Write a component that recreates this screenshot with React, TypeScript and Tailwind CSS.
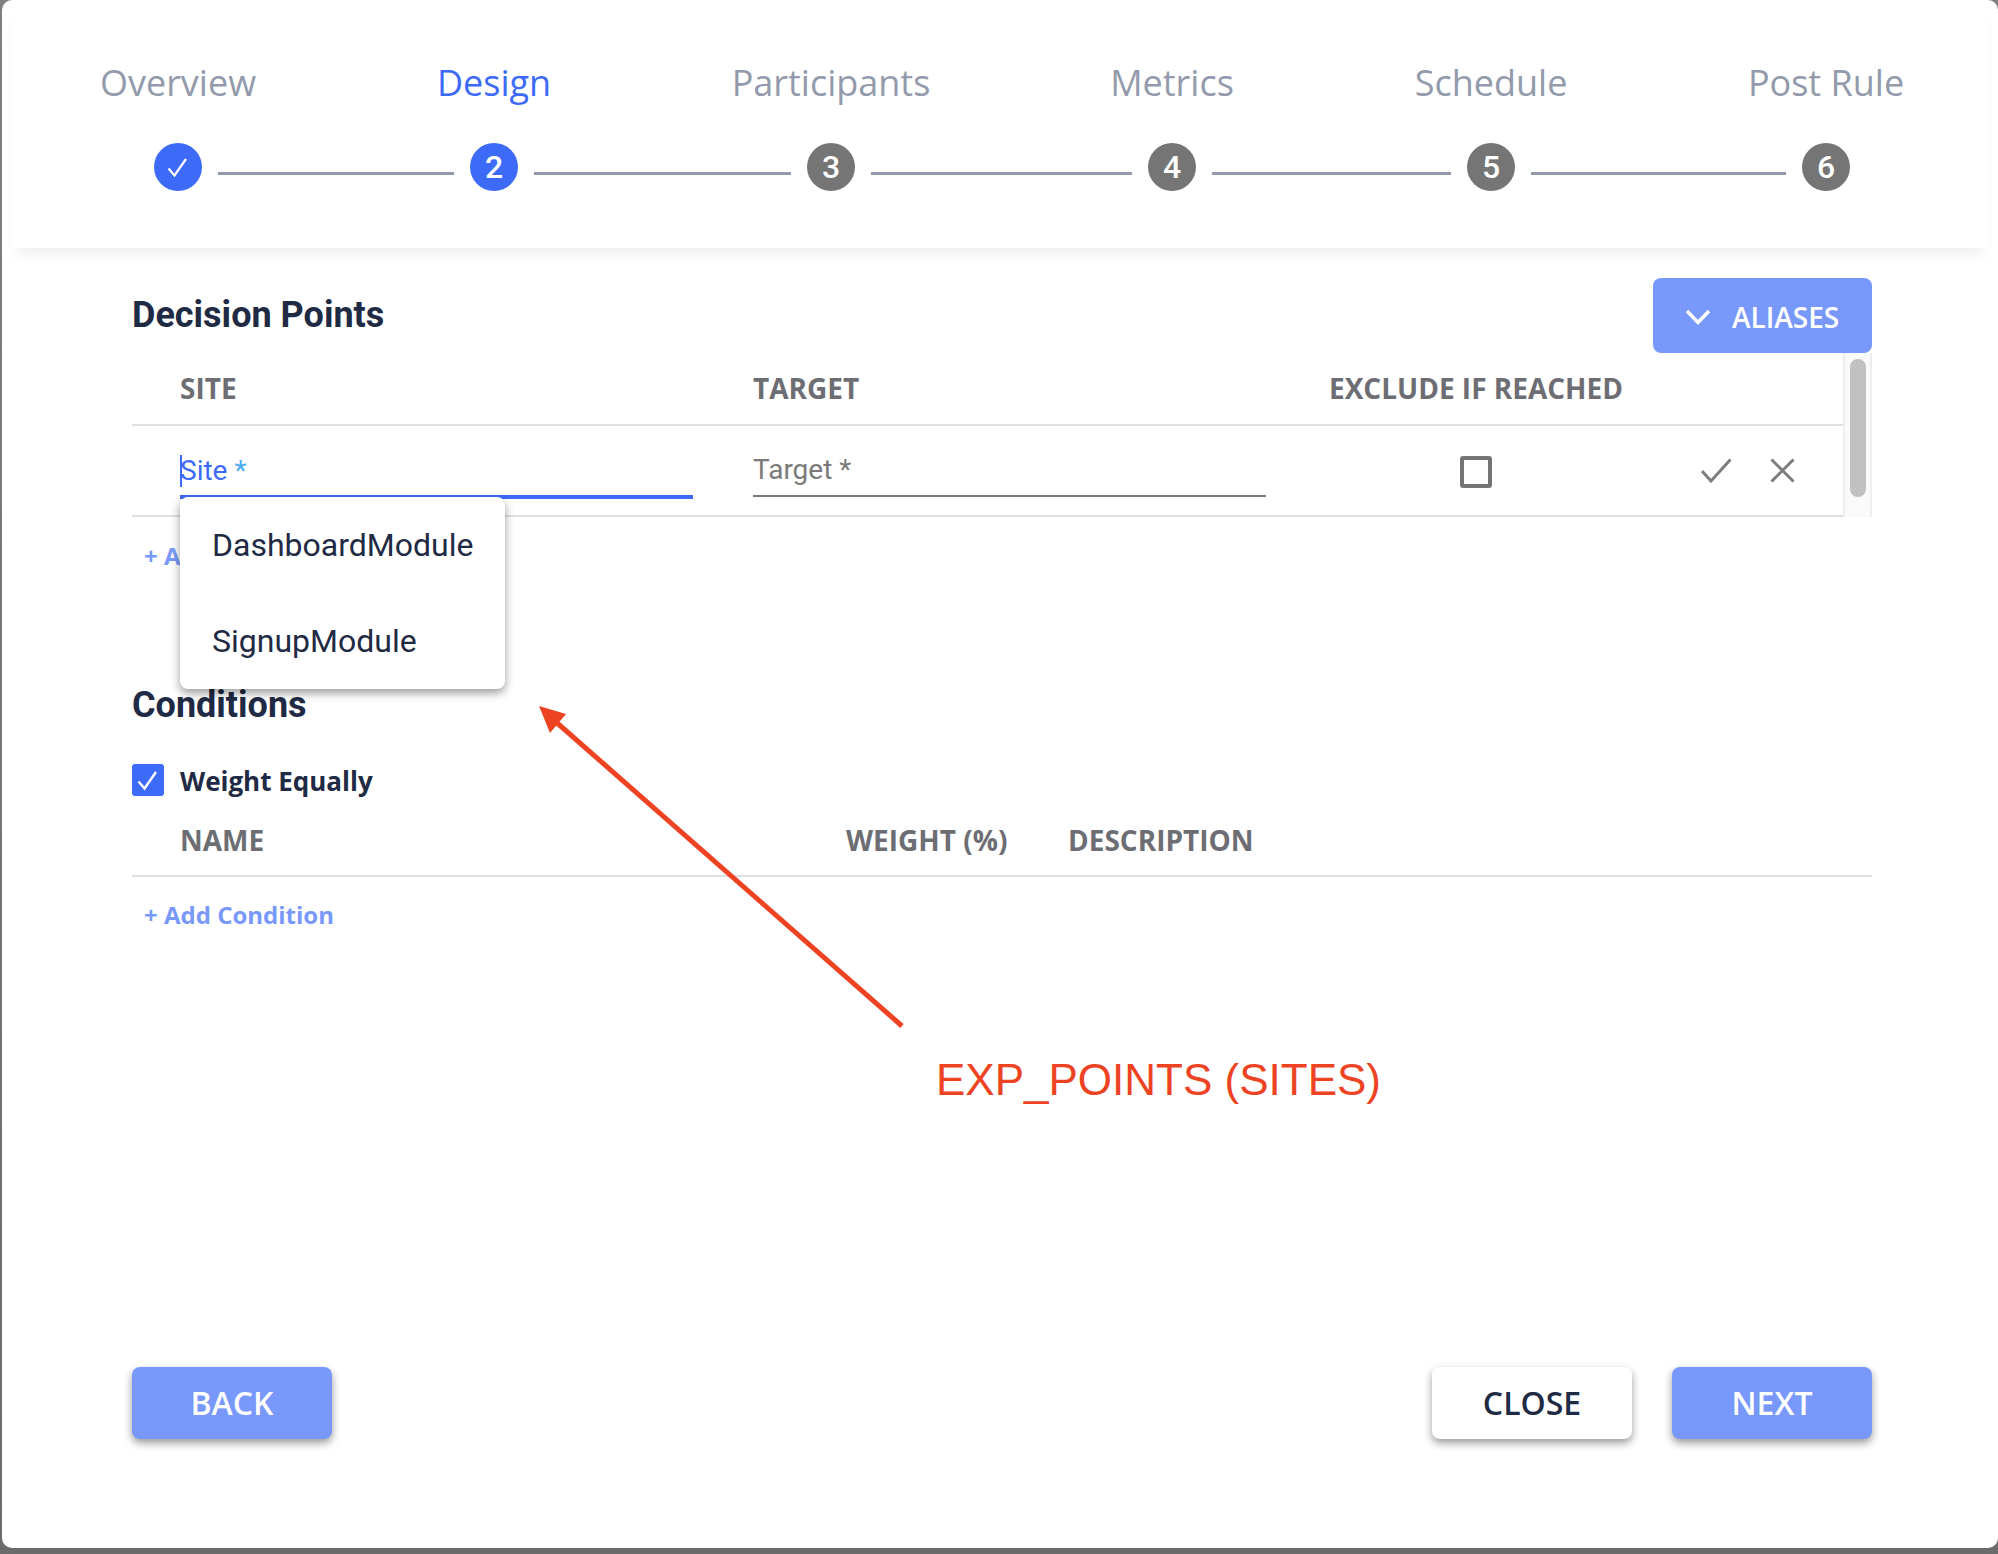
import React from "react";

const openSans = "font-['Open_Sans',sans-serif]";
const roboto = "font-['Roboto',sans-serif]";

function Step({ label, active, done, n }: { label: string; active?: boolean; done?: boolean; n?: number }) {
  return (
    <div className="flex w-12 flex-col items-center">
      <div className={`${openSans} h-12 whitespace-nowrap text-[36px] leading-[48px] ${active ? "text-[#3d6bf8]" : "text-[#929aab]"}`}>{label}</div>
      <div className={`mt-9 flex h-12 w-12 items-center justify-center rounded-full ${roboto} text-[32px] font-medium leading-none text-white ${active || done ? "bg-[#3d6bf8]" : "bg-[#757575]"}`}>
        {done ? (
          <svg width="24" height="24" viewBox="0 0 24 24" fill="none" stroke="white" strokeWidth="2.2"><path d="M2.5 13.5 L8.5 20.5 L20 4" /></svg>
        ) : n}
      </div>
    </div>
  );
}

function Line({ w }: { w: string }) {
  return <div className={`mx-4 mt-[113px] h-[3px] self-start bg-[#929aab] ${w}`} />;
}

function Th({ className, children }: { className?: string; children: React.ReactNode }) {
  return <div className={`${openSans} whitespace-nowrap text-[28px] font-bold leading-[40px] text-[#6d6e73] ${className ?? ""}`}>{children}</div>;
}

function AddLink({ children, className }: { children: React.ReactNode; className?: string }) {
  return <div className={`${openSans} text-[24px] font-bold leading-8 text-[#7899fb] ${className ?? ""}`}>{children}</div>;
}

function Btn({ children, white }: { children: React.ReactNode; white?: boolean }) {
  return (
    <button className={`${openSans} h-[72px] w-[200px] rounded-lg text-[32px] font-semibold shadow-[0_4px_8px_rgba(0,0,0,0.4)] ${white ? "bg-white text-[#1f2a44]" : "bg-[#7899fb] text-white"}`}>
      {children}
    </button>
  );
}

export default function App() {
  return (
    <div className="relative h-[1554px] w-[1998px] overflow-hidden bg-gradient-to-b from-[#808080] to-[#6b6b6b]">
      <div className="ml-[2px] flex h-[1548px] flex-col rounded-[10px] bg-white">
        <header className="mx-[10px] flex h-[248px] pl-[142px] pt-[59px] shadow-[0_12px_14px_-6px_rgba(0,0,0,0.07)]">
          <Step label="Overview" done />
          <Line w="w-[236px]" />
          <Step label="Design" active n={2} />
          <Line w="w-[257px]" />
          <Step label="Participants" n={3} />
          <Line w="w-[261px]" />
          <Step label="Metrics" n={4} />
          <Line w="w-[239px]" />
          <Step label="Schedule" n={5} />
          <Line w="w-[255px]" />
          <Step label="Post Rule" n={6} />
        </header>

        <main className="flex flex-1 flex-col pl-[130px] pr-[126px]">
          <div className="mt-[30px] flex h-[75px] items-center justify-between">
            <h2 className={`${roboto} pb-[1px] text-[36px] font-bold leading-none text-[#1f2a44]`}>Decision Points</h2>
            <button className={`${openSans} flex h-[75px] w-[219px] items-center rounded-lg bg-[#7899fb] pl-[33px] text-[28px] font-semibold text-white`}>
              <svg className="mt-[2px]" width="24" height="16" viewBox="0 0 24 16" fill="none" stroke="white" strokeWidth="3.5"><path d="M1 2 L12 13.5 L23 2" /></svg>
              <span className="ml-[22px] pt-[2px]">ALIASES</span>
            </button>
          </div>

          <div className="flex h-[164px]">
            <div className="w-[1711px]">
              <div className="flex h-[73px] items-center border-b-2 border-[#e0e0e0] pb-[2px]">
                <Th className="ml-[48px] w-[573px]">SITE</Th>
                <Th className="w-[576px]">TARGET</Th>
                <Th>EXCLUDE IF REACHED</Th>
              </div>
              <div className="flex h-[91px] border-b-2 border-[#e0e0e0]">
                <div className="relative ml-[48px] h-[73px] w-[513px] border-b-[4px] border-[#3d6bf8]">
                  <div className="absolute left-0 top-[29px] h-8 w-[2px] bg-[#3d6bf8]" />
                  <div className={`${roboto} absolute left-0 top-[29px] text-[28px] leading-[32px] text-[#3d6bf8]`}>
                    Site <span className="text-[#4ba8f5]">*</span>
                  </div>
                  <div className={`${roboto} absolute left-0 top-[calc(100%+2px)] z-10 h-[192px] w-[325px] rounded-lg bg-white pl-[32px] text-[32px] leading-[96px] text-[#1f2a44] shadow-[0_4px_10px_rgba(0,0,0,0.4)]`}>
                    <div>DashboardModule</div>
                    <div>SignupModule</div>
                  </div>
                </div>
                <div className="ml-[60px] h-[71px] w-[513px] border-b-2 border-[#7a7a7a]">
                  <div className={`${roboto} mt-[28px] text-[28px] leading-[32px] text-[#7a7a7a]`}>Target *</div>
                </div>
                <div className="ml-[194px] mt-[30px] h-8 w-8 rounded-[3px] border-[4px] border-[#757575]" />
                <svg className="ml-[209px] mt-[32px]" width="31" height="25" viewBox="0 0 31 25" fill="none" stroke="#7d7d7d" strokeWidth="3"><path d="M1 13 L10 23 L29.5 1.5" /></svg>
                <svg className="ml-[38px] mt-[32px]" width="25" height="25" viewBox="0 0 25 25" fill="none" stroke="#7d7d7d" strokeWidth="3"><path d="M1.5 1.5 L23.5 23.5 M23.5 1.5 L1.5 23.5" /></svg>
              </div>
            </div>
            <div className="w-[29px] border-x-2 border-[#eeeeee] bg-[#fafafa] pl-[5px] pt-[6px]">
              <div className="h-[138px] w-4 rounded-lg bg-[#c1c1c1]" />
            </div>
          </div>

          <AddLink className="ml-3 mt-[23px]">+ Add Site</AddLink>

          <h2 className={`${roboto} mt-[113px] text-[36px] font-bold leading-10 text-[#1f2a44]`}>Conditions</h2>

          <label className="mt-[39px] flex h-8 items-center">
            <span className="flex h-8 w-8 items-center justify-center rounded-[3px] bg-[#3d6bf8]">
              <svg width="24" height="24" viewBox="0 0 24 24" fill="none" stroke="white" strokeWidth="2.4"><path d="M2.5 13.5 L8.5 20.5 L20 4" /></svg>
            </span>
            <span className={`${openSans} ml-4 pt-[3px] text-[26px] font-bold text-[#1f2a44]`}>Weight Equally</span>
          </label>

          <div className="mt-[24px] flex h-[57px] items-start border-b-2 border-[#e0e0e0]">
            <Th className="ml-[48px] w-[666px]">NAME</Th>
            <Th className="w-[222px]">WEIGHT (%)</Th>
            <Th>DESCRIPTION</Th>
          </div>

          <AddLink className="ml-3 mt-[22px]">+ Add Condition</AddLink>

          <div className="mb-[109px] mt-auto flex items-center">
            <Btn>BACK</Btn>
            <div className="ml-auto flex gap-10">
              <Btn white>CLOSE</Btn>
              <Btn>NEXT</Btn>
            </div>
          </div>
        </main>
      </div>

      <svg className="absolute left-0 top-0 z-20" width="1998" height="1554" fill="none">
        <path d="M902 1026 L556 722" stroke="#ee4323" strokeWidth="5" />
        <polygon points="539,706 566,714 550,733" fill="#ee4323" />
      </svg>
      <div className="absolute left-[936px] top-[1052px] z-20 font-['Liberation_Sans',sans-serif] text-[44px] leading-[56px] text-[#ee4323]">EXP_POINTS (SITES)</div>
    </div>
  );
}
